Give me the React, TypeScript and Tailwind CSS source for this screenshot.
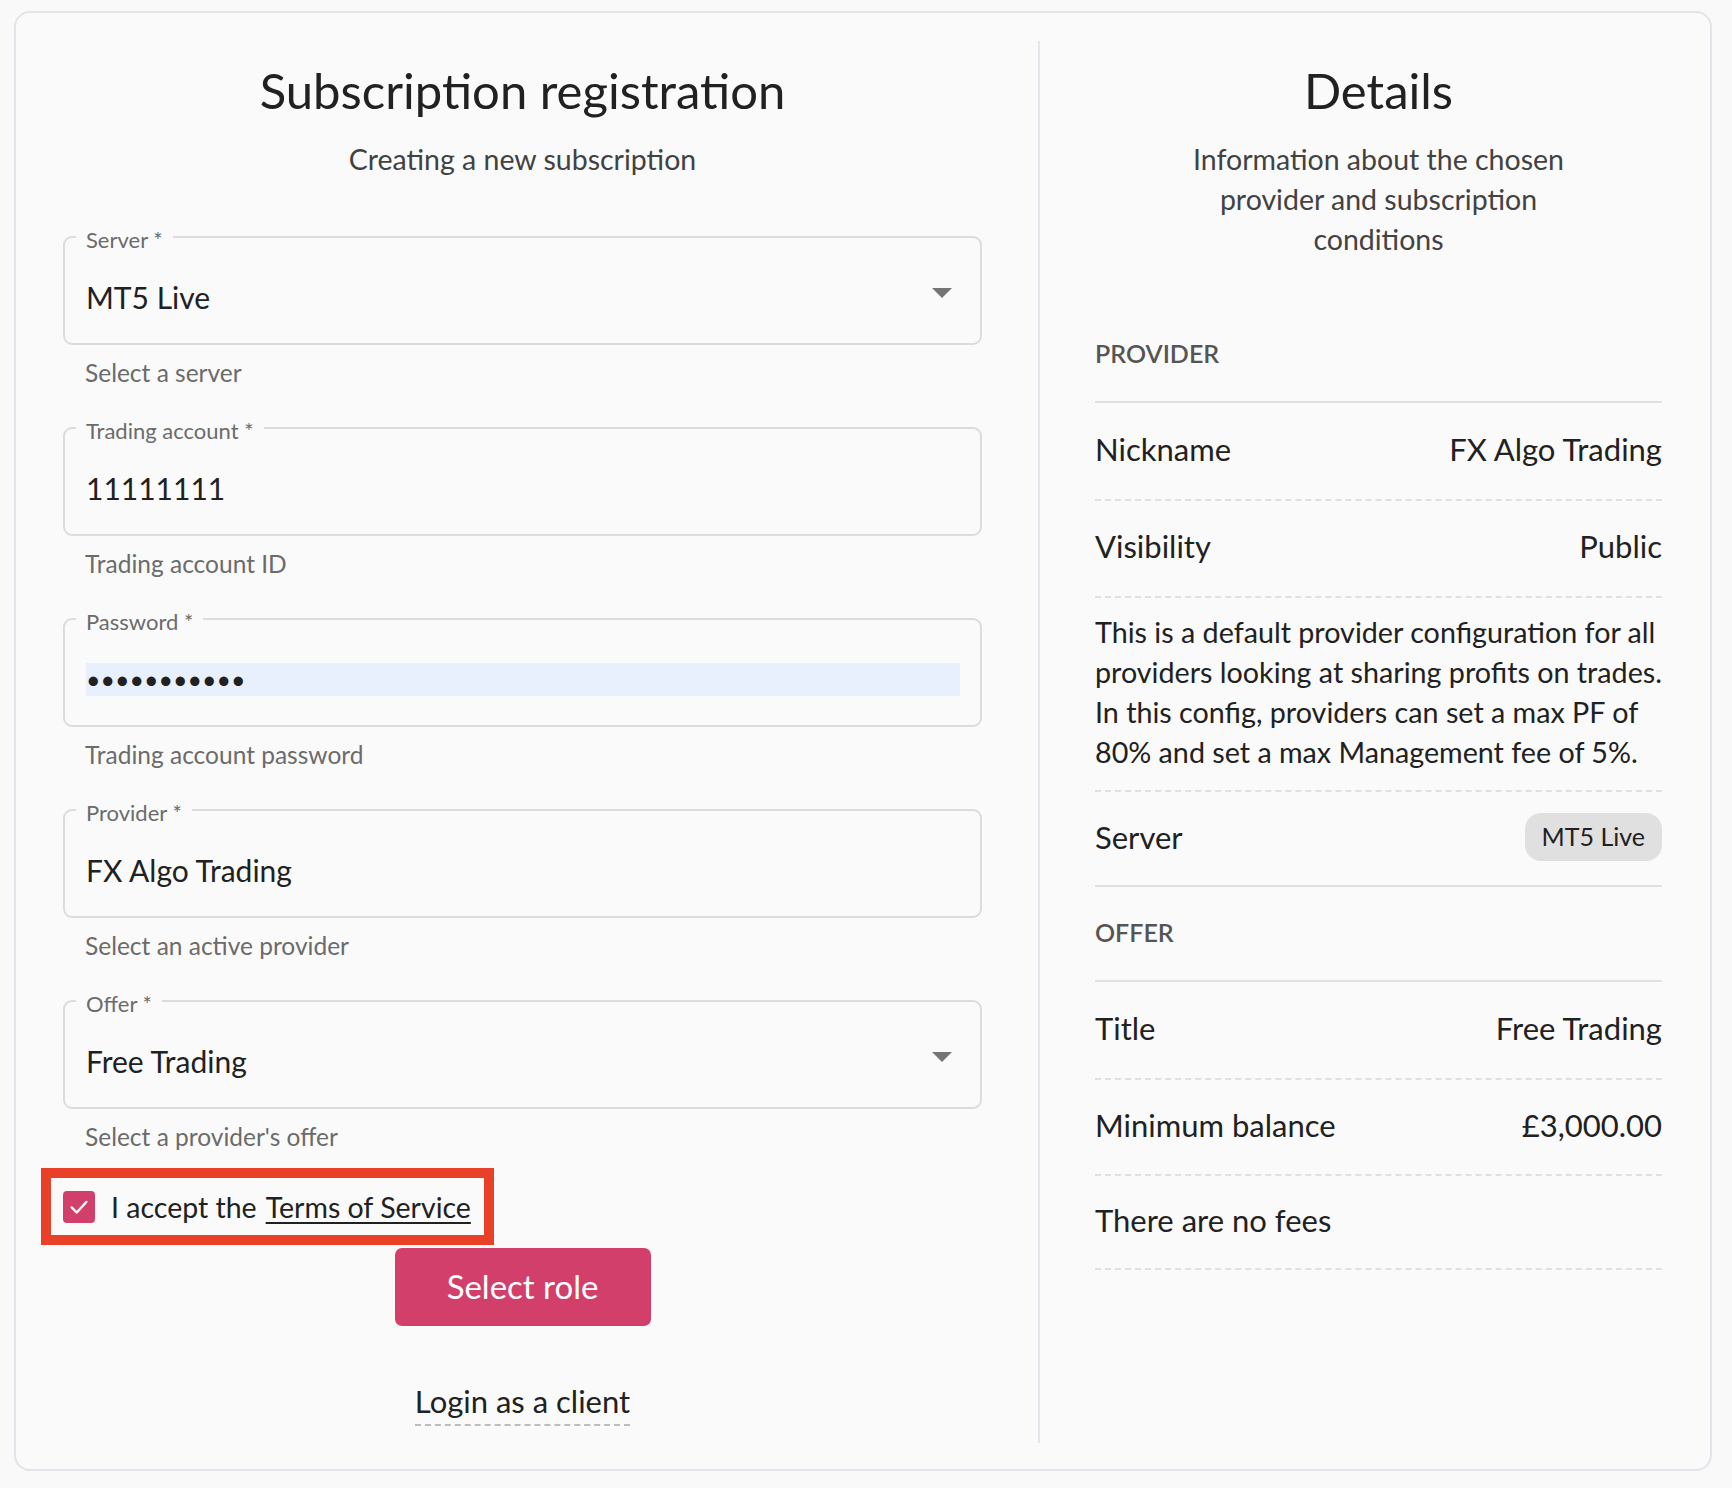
function Caret() {
  return (
    <svg width="20" height="10" viewBox="0 0 20 10" className="shrink-0">
      <polygon points="0,0 20,0 10,10" fill="#757575" />
    </svg>
  );
}

function Field({
  label,
  helper,
  children,
  select = false,
}: {
  label: string;
  helper: string;
  children: React.ReactNode;
  select?: boolean;
}) {
  return (
    <div>
      <div className="relative h-[109px] rounded-[9px] border-2 border-[#dcdcdc] pl-[21px] pr-[20px] pt-[43px]">
        <span className="absolute -top-[12px] left-[11px] bg-[#fafafa] px-[10px] text-[22px] leading-[28px] text-[#6b6b6b]">
          {label} *
        </span>
        <div className="flex h-[33px] items-center justify-between">
          {children}
          {select && <div className="mr-[8px] -mt-[10px]"><Caret /></div>}
        </div>
      </div>
      <p className="mt-[12px] pl-[22px] text-[24.5px] leading-[32px] text-[#6b6b6b]">{helper}</p>
    </div>
  );
}

function Row({ label, value, h }: { label: string; value: React.ReactNode; h: string }) {
  return (
    <div className={`flex items-center justify-between border-b-2 border-dashed border-[#dde1e6] pb-[4px] ${h}`}>
      <span>{label}</span>
      <span>{value}</span>
    </div>
  );
}

export default function App() {
  return (
    <div className="min-h-screen bg-[#f9f9f9] pl-[14px] pt-[11px] font-['Lato',sans-serif] text-[#212121]">
      <div className="flex h-[1460px] w-[1698px] rounded-[16px] border-2 border-[#e1e4e8] bg-[#fafafa] pb-[26px] pl-[47px] pt-[28px]">
        {/* left: form */}
        <div className="w-[919px] shrink-0">
          <h1 className="mt-[20px] text-center text-[49px] leading-[58px]">Subscription registration</h1>
          <p className="mt-[20px] text-center text-[28.5px] leading-[40px] text-[#424242]">Creating a new subscription</p>

          <div className="mt-[57px] space-y-[38px]">
            <Field label="Server" helper="Select a server" select>
              <span className="text-[30px] leading-[33px]">MT5 Live</span>
            </Field>
            <Field label="Trading account" helper="Trading account ID">
              <span className="text-[30px] leading-[33px]">11111111</span>
            </Field>
            <Field label="Password" helper="Trading account password">
              <div className="flex h-[33px] w-full items-center bg-[#e8f0fe]">
                <span className="text-[25px] leading-[33px]">•••••••••••</span>
              </div>
            </Field>
            <Field label="Provider" helper="Select an active provider">
              <span className="text-[30px] leading-[33px]">FX Algo Trading</span>
            </Field>
            <Field label="Offer" helper="Select a provider's offer" select>
              <span className="text-[30px] leading-[33px]">Free Trading</span>
            </Field>
          </div>

          <div className="-ml-[22px] mt-[15px] inline-flex h-[77px] items-center gap-[16px] border-[10px] border-[#e94128] pl-[12px] pr-[13px]">
            <span className="flex h-[32px] w-[32px] items-center justify-center rounded-[4px] bg-[#d13f6a]">
              <svg width="22" height="22" viewBox="0 0 24 24" fill="none" stroke="white" strokeWidth="2.6" strokeLinecap="round" strokeLinejoin="round">
                <polyline points="4,12.5 9.5,18 20,6.5" />
              </svg>
            </span>
            <span className="text-[28.5px] leading-[36px]">
              I accept the
              <span className="ml-[9px] underline decoration-2 underline-offset-[4px]">Terms of Service</span>
            </span>
          </div>

          <div className="mt-[3px] flex justify-center">
            <button className="h-[78px] w-[256px] rounded-[7px] bg-[#d13f6a] text-[33px] text-white">Select role</button>
          </div>

          <div className="mt-[57px] flex justify-center">
            <a className="inline-block border-b-2 border-dashed border-[#bdbdbd] pb-[5px] text-[31px] leading-[36px]">Login as a client</a>
          </div>
        </div>

        <div className="ml-[56px] w-[2px] shrink-0 bg-[#e3e6ea]" />

        {/* right: details */}
        <div className="ml-[55px] w-[567px] shrink-0 text-[31px]">
          <h2 className="mt-[20px] text-center text-[49px] leading-[58px]">Details</h2>
          <p className="mt-[20px] text-center text-[28.5px] leading-[40px] text-[#424242]">
            Information about the chosen
            <br />
            provider and subscription
            <br />
            conditions
          </p>

          <div className="mt-[48px]">
            <div className="flex h-[96px] items-center border-b-2 border-[#dde1e6] text-[25px] font-semibold text-[#555]">PROVIDER</div>
            <Row label="Nickname" value="FX Algo Trading" h="h-[98px]" />
            <Row label="Visibility" value="Public" h="h-[97px]" />
            <div className="whitespace-nowrap border-b-2 border-dashed border-[#dde1e6] pb-[18px] pt-[14px] text-[28.7px] leading-[40px]">
              This is a default provider configuration for all
              <br />
              providers looking at sharing profits on trades.
              <br />
              In this config, providers can set a max PF of
              <br />
              80% and set a max Management fee of 5%.
            </div>
            <div className="flex h-[95px] items-center justify-between border-b-2 border-[#dde1e6] pb-[3px]">
              <span>Server</span>
              <span className="flex h-[48px] items-center rounded-[16px] bg-[#e0e0e0] px-[17px] text-[25px]">MT5 Live</span>
            </div>
            <div className="flex h-[95px] items-center border-b-2 border-[#dde1e6] pb-[2px] text-[25px] font-semibold text-[#555]">OFFER</div>
            <Row label="Title" value="Free Trading" h="h-[98px]" />
            <Row label="Minimum balance" value="£3,000.00" h="h-[96px]" />
            <div className="flex h-[94px] items-center border-b-2 border-dashed border-[#dde1e6] pb-[4px]">There are no fees</div>
          </div>
        </div>
      </div>
    </div>
  );
}
